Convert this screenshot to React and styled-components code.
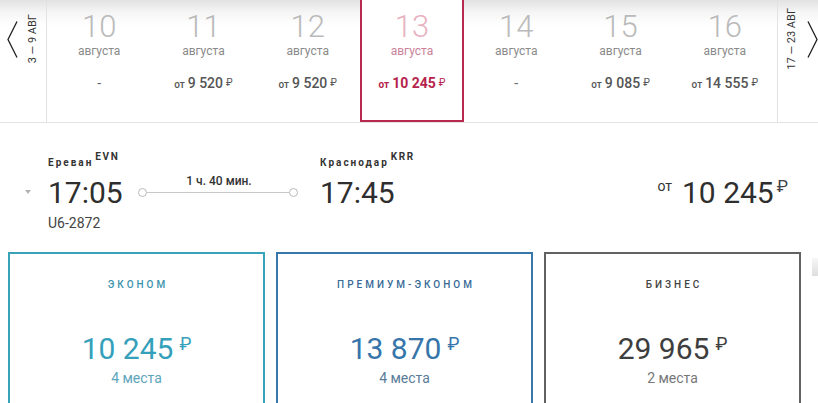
import React from 'react';
import styled, { createGlobalStyle, css } from 'styled-components';

const GlobalStyle = createGlobalStyle`
  html, body { margin: 0; padding: 0; background: #fff; }
  body {
    font-family: Roboto, "Noto Sans", "Liberation Sans", sans-serif;
    overflow: hidden;
  }
  * { box-sizing: border-box; }
`;

const Page = styled.div`
  width: 818px;
  height: 403px;
  overflow: hidden;
  background: #fff;
`;

/* ---------- date strip ---------- */
const DateStrip = styled.div`
  display: flex;
  height: 123px;
  border-bottom: 1px solid #e4e4e4;
  background: linear-gradient(to bottom, #e2e2e2 0px, #f5f5f5 12px, #fff 26px);
`;

const Nav = styled.div`
  flex: none;
  width: ${p => p.$w}px;
  height: 100%;
  padding-left: ${p => p.$pl}px;
  ${p => (p.$side === 'left' ? 'border-right' : 'border-left')}: 1px solid #e2e2e2;
`;

const NavInner = styled.div`
  display: flex;
  align-items: center;
  gap: 10px;
  height: 78px;
`;

const VerticalText = styled.span`
  writing-mode: vertical-rl;
  transform: rotate(180deg);
  font-size: 11px;
  line-height: 10px;
  color: #333;
  white-space: nowrap;
`;

const Chevron = ({ dir }) => (
  <svg width="11" height="37" viewBox="0 0 11 37" style={{ display: 'block', flex: 'none' }}>
    <polyline
      points={dir === 'left' ? '10,0.5 1,18.5 10,36.5' : '1,0.5 10,18.5 1,36.5'}
      fill="none"
      stroke="#1e1e1e"
      strokeWidth="1.3"
    />
  </svg>
);

const Days = styled.div`
  flex: 1;
  display: flex;
  height: 100%;
`;

const Day = styled.div`
  flex: 1;
  display: flex;
  flex-direction: column;
  align-items: center;
  padding-top: 11px;
  ${p =>
    p.$selected &&
    css`
      background: #fff;
      box-shadow: inset 2px 0 0 #b8294f, inset -2px 0 0 #b8294f, inset 0 -2px 0 #b8294f;
    `}
`;

const DayNum = styled.div`
  font-family: "Roboto Light", Roboto, sans-serif;
  font-size: 31px;
  font-weight: 300;
  line-height: 1;
  color: ${p => (p.$selected ? '#e8b1c1' : '#bababa')};
`;

const Month = styled.div`
  margin-top: 3px;
  font-size: 12px;
  line-height: 1;
  color: ${p => (p.$selected ? '#c9829a' : '#8a8a8a')};
`;

const DayPrice = styled.div`
  margin-top: 19px;
  font-size: 14px;
  line-height: 1;
  white-space: nowrap;
  font-weight: ${p => (p.$selected ? 700 : 500)};
  color: ${p => (p.$selected ? '#b5234c' : '#555')};
`;

const DaySmall = styled.span`
  font-size: 10px;
  margin-right: 3px;
`;

const DayRub = styled.span`
  font-size: 10px;
  font-weight: 400;
  margin-left: 3px;
  position: relative;
  top: -2px;
`;

const Dash = styled.div`
  margin-top: 19px;
  font-size: 14px;
  line-height: 1;
  color: #666;
`;

/* ---------- flight row ---------- */
const FlightRow = styled.div`
  display: flex;
  align-items: flex-start;
  padding: 34px 30px 0 25px;
`;

const Toggle = styled.span`
  flex: none;
  width: 0;
  height: 0;
  margin-top: 33px;
  border-left: 3px solid transparent;
  border-right: 3px solid transparent;
  border-top: 4px solid #b4b4b4;
`;

const Point = styled.div`
  flex: none;
  width: ${p => p.$w}px;
  margin-left: ${p => p.$ml}px;
`;

const City = styled.div`
  font-size: 10px;
  line-height: 12px;
  font-weight: 700;
  letter-spacing: 2px;
  color: #333;
  white-space: nowrap;
`;

const Code = styled.span`
  position: relative;
  top: -6px;
  margin-left: 2px;
  letter-spacing: 1.6px;
`;

const Time = styled.div`
  margin-top: 9px;
  font-size: 30px;
  line-height: 1;
  color: #2e2e2e;
`;

const FlightNo = styled.div`
  margin-top: 8px;
  font-size: 14px;
  line-height: 1;
  color: #444;
`;

const Timeline = styled.div`
  flex: none;
  width: 160px;
  margin-top: 18px;
  display: flex;
  flex-direction: column;
  align-items: center;
`;

const Duration = styled.div`
  font-size: 12px;
  line-height: 1;
  font-weight: 500;
  color: #333;
  padding-left: 2px;
`;

const Track = styled.div`
  align-self: stretch;
  margin-top: 1px;
  height: 9px;
  display: flex;
  align-items: center;
`;

const Dot = styled.span`
  flex: none;
  width: 9px;
  height: 9px;
  border: 1px solid #b9b9b9;
  border-radius: 50%;
  background: #fff;
`;

const Line = styled.span`
  flex: 1;
  height: 1px;
  background: #c9c9c9;
`;

const BigPrice = styled.div`
  margin-left: auto;
  margin-top: 21px;
  display: flex;
  align-items: flex-start;
  color: #2e2e2e;
`;

const BigFrom = styled.span`
  font-size: 14px;
  line-height: 1;
  margin-top: 1px;
  margin-right: 10px;
  color: #333;
`;

const BigAmount = styled.span`
  font-size: 30px;
  line-height: 1;
`;

const BigRub = styled.span`
  font-size: 17px;
  line-height: 1;
  margin-left: 3px;
  color: #444;
`;

/* ---------- fare cards ---------- */
const Cards = styled.div`
  display: flex;
  align-items: flex-start;
  gap: 11px;
  margin-top: 22px;
  padding-left: 8px;
  width: 1000px;
`;

const Card = styled.div`
  flex: none;
  width: 257px;
  height: 170px;
  border: 2px solid ${p => p.$c.border};
  padding-top: 26px;
  display: flex;
  flex-direction: column;
  align-items: center;
`;

const CardTitle = styled.div`
  font-size: 10px;
  line-height: 1;
  font-weight: 500;
  letter-spacing: 3px;
  padding-left: 3px;
  color: ${p => p.$c.title};
`;

const CardPrice = styled.div`
  margin-top: 44px;
  display: flex;
  align-items: flex-start;
  color: ${p => p.$c.price};
`;

const CardAmount = styled.span`
  font-size: 30px;
  line-height: 1;
`;

const CardRub = styled.span`
  font-size: 18px;
  line-height: 1;
  margin-left: 6px;
  margin-top: 1px;
`;

const Seats = styled.div`
  margin-top: 7px;
  font-size: 14px;
  line-height: 1;
  color: ${p => p.$c.seats};
`;

const Stub = styled.div`
  flex: none;
  width: 120px;
  height: 18px;
  margin-top: 6px;
  background: linear-gradient(to bottom, #f7f7f7, #dedede);
`;

const days = [
  { d: 10, price: null },
  { d: 11, price: '9 520' },
  { d: 12, price: '9 520' },
  { d: 13, price: '10 245', selected: true },
  { d: 14, price: null },
  { d: 15, price: '9 085' },
  { d: 16, price: '14 555' },
];

const fares = [
  {
    title: 'ЭКОНОМ',
    price: '10 245',
    seats: '4 места',
    c: { border: '#38a3b9', title: '#3b93ab', price: '#35a0ba', seats: '#5ea5bc' },
  },
  {
    title: 'ПРЕМИУМ-ЭКОНОМ',
    price: '13 870',
    seats: '4 места',
    c: { border: '#3777aa', title: '#386a97', price: '#3675aa', seats: '#5a7c98' },
  },
  {
    title: 'БИЗНЕС',
    price: '29 965',
    seats: '2 места',
    c: { border: '#626262', title: '#444', price: '#3e3e3e', seats: '#777' },
  },
];

export default function App() {
  return (
    <Page>
      <GlobalStyle />
      <DateStrip>
        <Nav $side="left" $w={47} $pl={7}>
          <NavInner>
            <Chevron dir="left" />
            <VerticalText>3 — 9 АВГ</VerticalText>
          </NavInner>
        </Nav>
        <Days>
          {days.map(day => (
            <Day key={day.d} $selected={day.selected}>
              <DayNum $selected={day.selected}>{day.d}</DayNum>
              <Month $selected={day.selected}>августа</Month>
              {day.price ? (
                <DayPrice $selected={day.selected}>
                  <DaySmall>от</DaySmall>
                  {day.price}
                  <DayRub>₽</DayRub>
                </DayPrice>
              ) : (
                <Dash>-</Dash>
              )}
            </Day>
          ))}
        </Days>
        <Nav $side="right" $w={41} $pl={9}>
          <NavInner>
            <VerticalText>17 — 23 АВГ</VerticalText>
            <Chevron dir="right" />
          </NavInner>
        </Nav>
      </DateStrip>

      <FlightRow>
        <Toggle />
        <Point $w={90} $ml={17}>
          <City>
            Ереван<Code>EVN</Code>
          </City>
          <Time>17:05</Time>
          <FlightNo>U6-2872</FlightNo>
        </Point>
        <Timeline>
          <Duration>1 ч. 40 мин.</Duration>
          <Track>
            <Dot />
            <Line />
            <Dot />
          </Track>
        </Timeline>
        <Point $w={120} $ml={22}>
          <City>
            Краснодар<Code>KRR</Code>
          </City>
          <Time>17:45</Time>
        </Point>
        <BigPrice>
          <BigFrom>от</BigFrom>
          <BigAmount>10 245</BigAmount>
          <BigRub>₽</BigRub>
        </BigPrice>
      </FlightRow>

      <Cards>
        {fares.map(f => (
          <Card key={f.title} $c={f.c}>
            <CardTitle $c={f.c}>{f.title}</CardTitle>
            <CardPrice $c={f.c}>
              <CardAmount>{f.price}</CardAmount>
              <CardRub>₽</CardRub>
            </CardPrice>
            <Seats $c={f.c}>{f.seats}</Seats>
          </Card>
        ))}
        <Stub />
      </Cards>
    </Page>
  );
}
